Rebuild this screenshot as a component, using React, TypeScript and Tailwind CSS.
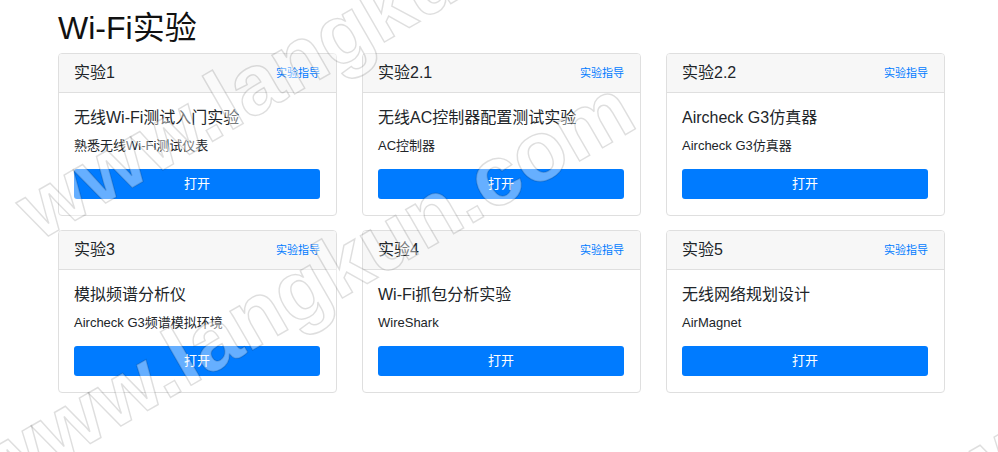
const labs = [
  { no: "实验1", title: "无线Wi-Fi测试入门实验", desc: "熟悉无线Wi-Fi测试仪表" },
  { no: "实验2.1", title: "无线AC控制器配置测试实验", desc: "AC控制器" },
  { no: "实验2.2", title: "Aircheck G3仿真器", desc: "Aircheck G3仿真器" },
  { no: "实验3", title: "模拟频谱分析仪", desc: "Aircheck G3频谱模拟环境" },
  { no: "实验4", title: "Wi-Fi抓包分析实验", desc: "WireShark" },
  { no: "实验5", title: "无线网络规划设计", desc: "AirMagnet" },
];

function LabCard({ no, title, desc }: { no: string; title: string; desc: string }) {
  return (
    <div className="border border-[#dfdfdf] rounded-[4px] bg-white overflow-hidden">
      <div className="h-[39px] bg-[#f7f7f7] border-b border-[#dfdfdf] flex items-center justify-between pl-[15px] pr-4">
        <span className="text-[16px] text-[#212529]">{no}</span>
        <a href="#" className="text-[11px] text-[#007bff]">实验指导</a>
      </div>
      <div className="pl-[15px] pr-4 pt-[15px] pb-4">
        <div className="text-[16px] leading-5 text-[#212529]">{title}</div>
        <div className="mt-[9px] text-[13px] leading-[18px] text-[#212529]">{desc}</div>
        <button className="mt-[14px] w-full h-[30px] rounded-[3px] bg-[#007bff] text-white text-[13px]">
          打开
        </button>
      </div>
    </div>
  );
}

export default function App() {
  return (
    <div className="relative h-[452px] overflow-hidden bg-white font-['Liberation_Sans','Noto_Sans_CJK_SC',sans-serif]">
      <div className="w-[887px] ml-[58px] pt-[8px]">
        <h1 className="text-[32px] leading-[40px] text-[#111] mb-[5px]">Wi-Fi实验</h1>
        <div className="grid grid-cols-3 gap-x-[25px] gap-y-[14px]">
          {labs.map((l) => (
            <LabCard key={l.no} {...l} />
          ))}
        </div>
      </div>

      {/* site watermark */}
      <div className="pointer-events-none absolute inset-0 font-['Liberation_Sans',sans-serif] font-bold text-[85px] leading-none text-white/40 [-webkit-text-stroke:1.5px_rgba(0,0,0,0.13)]">
        <span className="absolute left-[45px] top-[168px] origin-bottom-left -rotate-30 whitespace-nowrap">www.langkun.com</span>
        <span className="absolute left-[3px] top-[424px] origin-bottom-left -rotate-30 whitespace-nowrap">www.langkun.com</span>
        <span className="absolute left-[975px] top-[430px] origin-bottom-left -rotate-30 whitespace-nowrap">www.langkun.com</span>
      </div>
    </div>
  );
}
